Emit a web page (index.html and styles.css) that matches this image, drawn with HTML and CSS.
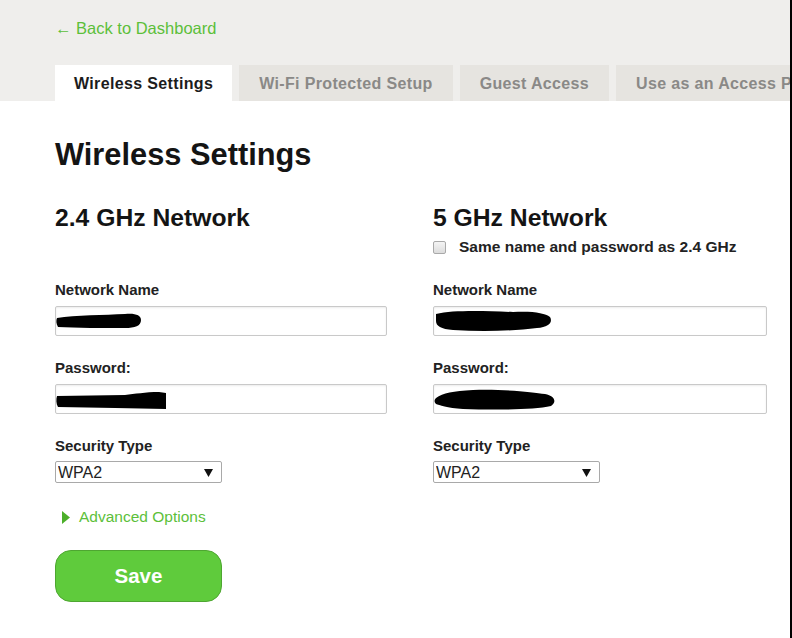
FILE: index.html
```html
<!DOCTYPE html>
<html lang="en">
<head>
    <meta charset="UTF-8">
    <meta name="viewport" content="width=device-width, initial-scale=1.0">
    <title>Wireless Settings</title>
    <link rel="stylesheet" href="styles.css">
</head>
<body>
<div class="page">

    <div class="top">
        <a class="back" href="#">&larr; Back to Dashboard</a>
        <div class="tabs">
            <div class="tab active">Wireless Settings</div>
            <div class="tab">Wi-Fi Protected Setup</div>
            <div class="tab">Guest Access</div>
            <div class="tab">Use as an Access Point</div>
        </div>
    </div>

    <div class="main">
        <h1>Wireless Settings</h1>

        <div class="columns">
            <!-- 2.4 GHz -->
            <div class="col">
                <div class="col-head">
                    <h2>2.4 GHz Network</h2>
                </div>

                <label class="lbl">Network Name</label>
                <div class="field">
                    <input type="text" class="text-input">
                    <svg class="redact" width="120" height="30" viewBox="0 0 120 30">
                        <path d="M2 12 C20 9 50 9 70 8 C80 7 86 9 86 14 C86 20 80 22 70 22 C50 22 20 22 3 21 C1 18 1 14 2 12 Z" fill="#000"/>
                    </svg>
                </div>

                <label class="lbl">Password:</label>
                <div class="field">
                    <input type="password" class="text-input">
                    <svg class="redact" width="120" height="30" viewBox="0 0 120 30">
                        <path d="M2 12 L70 11 C80 10 90 8 104 8 L111 9 L111 25 L60 24 L3 23 C1 20 1 15 2 12 Z" fill="#000"/>
                    </svg>
                </div>

                <label class="lbl">Security Type</label>
                <div class="select-wrap">
                    <select class="select">
                        <option>WPA2</option>
                    </select>
                    <svg class="caret" width="9" height="8" viewBox="0 0 9 8"><path d="M0 0 H9 L4.5 8 Z" fill="#111"/></svg>
                </div>

                <a class="advanced" href="#">
                    <svg width="8" height="13" viewBox="0 0 8 13"><path d="M0 0 L8 6.5 L0 13 Z" fill="#4caf2a"/></svg>
                    Advanced Options
                </a>

                <button class="save">Save</button>
            </div>

            <!-- 5 GHz -->
            <div class="col">
                <div class="col-head">
                    <h2>5 GHz Network</h2>
                    <label class="same">
                        <input type="checkbox" class="check">
                        Same name and password as 2.4 GHz
                    </label>
                </div>

                <label class="lbl">Network Name</label>
                <div class="field">
                    <input type="text" class="text-input">
                    <svg class="redact" width="130" height="30" viewBox="0 0 130 30">
                        <path d="M3 8 C20 4 50 5 80 6 C100 5 112 7 117 11 C120 16 116 21 104 22 C80 25 50 26 20 24 C8 23 3 20 3 15 Z" fill="#000"/>
                    </svg>
                </div>

                <label class="lbl">Password:</label>
                <div class="field">
                    <input type="password" class="text-input">
                    <svg class="redact" width="130" height="30" viewBox="0 0 130 30">
                        <path d="M3 14 C10 9 20 7 40 6 C70 5 100 8 112 10 C122 12 124 18 118 22 C100 26 60 26 30 25 C14 24 6 21 3 20 C1 18 1 16 3 14 Z" fill="#000"/>
                    </svg>
                </div>

                <label class="lbl">Security Type</label>
                <div class="select-wrap">
                    <select class="select">
                        <option>WPA2</option>
                    </select>
                    <svg class="caret" width="9" height="8" viewBox="0 0 9 8"><path d="M0 0 H9 L4.5 8 Z" fill="#111"/></svg>
                </div>
            </div>
        </div>
    </div>

</div>
</body>
</html>
```

FILE: styles.css
```css
body {
    margin: 0;
    font-family: "Liberation Sans", Arial, sans-serif;
    background: #fff;
    color: #1c1c1c;
}
.page {
    width: 790px;
    height: 638px;
    border-right: 2px solid #000;
    overflow: hidden;
}

/* grey header with back link and tabs */
.top {
    background-color: #efeeec;
    padding: 18px 0 0 55px;
}
.back {
    display: block;
    color: #5cbf3a;
    text-decoration: none;
    font-size: 16.5px;
    line-height: 20px;
}
.tabs {
    display: flex;
    gap: 7px;
    margin-top: 27px;
    white-space: nowrap;
    overflow: hidden;
}
.tab {
    flex-shrink: 0;
    height: 36px;
    line-height: 37px;
    padding: 0 20px;
    background-color: #e6e4e0;
    color: #8a8987;
    font-weight: bold;
    font-size: 16px;
    letter-spacing: 0.35px;
}
.tab.active {
    background-color: #fff;
    color: #1c1c1c;
    padding: 0 19px;
}

/* content */
.main {
    padding: 36px 0 0 55px;
}
h1 {
    margin: 0;
    font-size: 30.8px;
    line-height: 36px;
    font-weight: bold;
    color: #141414;
}
.columns {
    display: grid;
    grid-template-columns: 332px 334px;
    column-gap: 46px;
    margin-top: 31px;
}
.col {
    display: flex;
    flex-direction: column;
    align-items: flex-start;
}
.col-head {
    height: 77px;
}
h2 {
    margin: 0;
    font-size: 24.7px;
    line-height: 28px;
    font-weight: bold;
    color: #141414;
}
.same {
    display: flex;
    align-items: center;
    gap: 13px;
    margin-top: 6px;
    font-size: 15.5px;
    font-weight: bold;
    line-height: 18px;
    color: #222;
}
.check {
    appearance: none;
    width: 13px;
    height: 13px;
    margin: 0;
    border: 1px solid #a9a9a9;
    border-radius: 2px;
    background: linear-gradient(#f4f4f4, #dcdcdc);
}
.lbl {
    display: block;
    font-size: 15px;
    font-weight: bold;
    line-height: 18px;
    color: #222;
}
.field {
    position: relative;
    width: 100%;
    margin: 7px 0 23px;
}
.text-input {
    display: block;
    box-sizing: border-box;
    width: 100%;
    height: 30px;
    margin: 0;
    border: 1px solid #c9c9c9;
    border-radius: 2px;
    box-shadow: inset 0 1px 2px rgba(0, 0, 0, 0.08);
    background: #fff;
}
.redact {
    position: absolute;
    left: 0;
    top: 0;
}
.select-wrap {
    position: relative;
    width: 167px;
    margin-top: 6px;
}
.select {
    appearance: none;
    display: block;
    box-sizing: border-box;
    width: 100%;
    height: 22px;
    margin: 0;
    padding: 0 0 0 2px;
    border: 1px solid #a9a9a9;
    border-radius: 2px;
    background: #fff;
    font-family: "Liberation Sans", Arial, sans-serif;
    font-size: 16px;
    color: #222;
}
.caret {
    position: absolute;
    right: 9px;
    top: 8px;
}
.advanced {
    display: flex;
    align-items: center;
    gap: 9px;
    margin: 25px 0 0 7px;
    color: #5cbf3a;
    text-decoration: none;
    font-size: 15.5px;
    line-height: 18px;
}
.save {
    width: 167px;
    height: 52px;
    margin-top: 24px;
    border: 1px solid #4ea631;
    border-radius: 16px;
    background-color: #5fcb3c;
    color: #fff;
    font-family: "Liberation Sans", Arial, sans-serif;
    font-size: 20.5px;
    font-weight: bold;
    cursor: pointer;
}
```
